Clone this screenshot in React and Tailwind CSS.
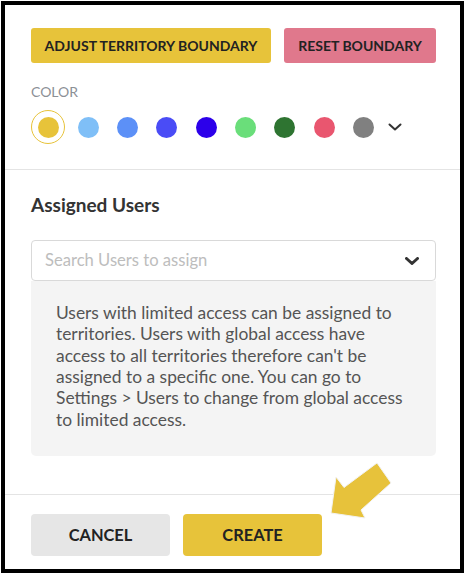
import React from 'react';

const COLORS = ['#7fbff7', '#5c90f7', '#4a4cf6', '#2c00ea', '#6ade7a', '#2e7431', '#e9566f', '#808080'];

const Chevron = ({ className, width = 3 }) => (
  <svg viewBox="0 0 14 8" className={className} fill="none">
    <path d="M1.5 1.5 L7 6.5 L12.5 1.5" stroke="currentColor" strokeWidth={width} strokeLinecap="round" strokeLinejoin="round" />
  </svg>
);

export default function App() {
  return (
    <div className="relative h-[575px] w-[466px] bg-white p-px font-['Lato','Liberation_Sans',sans-serif]">
      <div className="flex h-[572px] w-[463px] flex-col border-4 border-black">
        {/* boundary + colour */}
        <div className="pl-[26px] pr-[24px] pt-[23px] pb-[25px]">
          <div className="flex gap-[13px]">
            <button className="h-[35px] w-[240px] rounded-[3px] bg-[#e7c33a] text-[14px] font-bold uppercase text-[#222]">
              Adjust Territory Boundary
            </button>
            <button className="h-[35px] w-[152px] rounded-[3px] bg-[#e0788c] text-[14px] font-bold uppercase text-[#222]">
              Reset Boundary
            </button>
          </div>
          <p className="mt-[20px] text-[14px] leading-[17px] text-[#8c9096]">COLOR</p>
          <div className="mt-[10px] flex h-[34px] items-center">
            <div className="flex h-[34px] w-[34px] shrink-0 items-center justify-center rounded-full border border-[#e7c33a]">
              <span className="h-[21px] w-[21px] rounded-full bg-[#e7c33a]" />
            </div>
            {COLORS.map((c, i) => (
              <span
                key={c}
                className={`${i === 0 ? 'ml-[12.5px]' : 'ml-[18.4px]'} h-[21px] w-[21px] shrink-0 rounded-full`}
                style={{ background: c }}
              />
            ))}
            <Chevron className="ml-[14px] h-[8px] w-[14px] text-[#333]" width={2} />
          </div>
        </div>

        <div className="h-px bg-[#e4e4e4]" />

        {/* assigned users */}
        <div className="pl-[26px] pr-[24px] pt-[22px] pb-[38px]">
          <h2 className="text-[19px] font-bold leading-[25px] text-[#333]">Assigned Users</h2>
          <div className="mt-[23px] flex h-[41px] items-center justify-between rounded-[4px] border border-[#d9d9d9] pl-[13px] pr-[16px]">
            <span className="text-[16.6px] text-[#bdbdbd]">Search Users to assign</span>
            <Chevron className="h-[8px] w-[14px] text-[#333]" width={3} />
          </div>
          <div className="rounded-b-[5px] bg-[#f4f4f4] px-[25px] pt-[21px] pb-[26px] text-[17.4px] leading-[21.33px] text-[#555]">
            Users with limited access can be assigned to territories. Users with global access have access to all
            territories therefore can't be assigned to a specific one. You can go to Settings &gt; Users to change from
            global access to limited access.
          </div>
        </div>

        <div className="h-px bg-[#e4e4e4]" />

        {/* actions */}
        <div className="flex gap-[13px] pl-[26px] pt-[19px]">
          <button className="h-[42px] w-[139px] rounded-[4px] bg-[#e6e6e6] text-[16.4px] font-bold text-[#222]">
            CANCEL
          </button>
          <button className="h-[42px] w-[139px] rounded-[4px] bg-[#e7c33a] text-[16.4px] font-bold text-[#222]">
            CREATE
          </button>
        </div>
      </div>

      {/* pointer arrow */}
      <svg className="pointer-events-none absolute left-0 top-0" width="466" height="575" viewBox="0 0 466 575">
        <polygon
          points="331,513 336,477 344,487.5 377,463 391,483 361,510 365,518"
          fill="#e7c23b"
          stroke="#f2f2f2"
          strokeWidth="1"
          strokeLinejoin="miter"
        />
      </svg>
    </div>
  );
}
